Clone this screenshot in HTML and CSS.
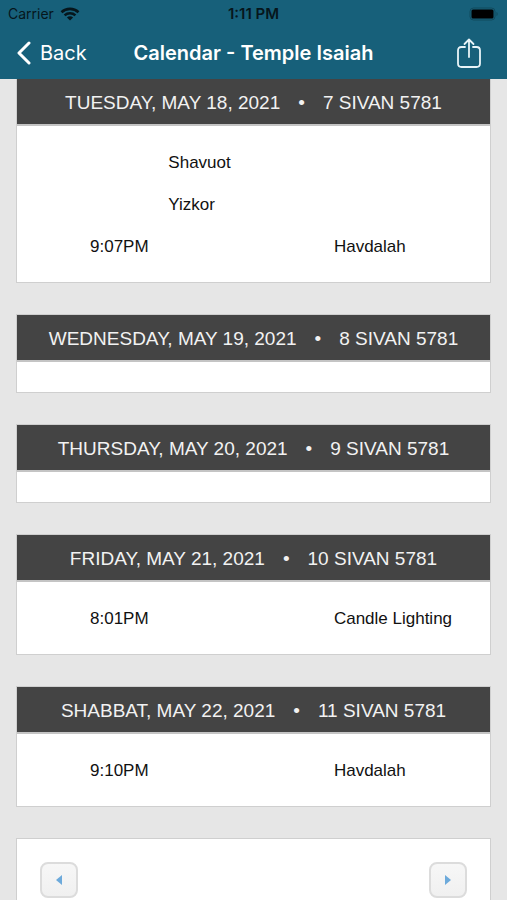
FILE: index.html
```html
<!DOCTYPE html>
<html lang="en">
<head>
  <meta charset="UTF-8" />
  <meta name="viewport" content="width=device-width, initial-scale=1.0" />
  <title>Calendar - Temple Isaiah</title>
  <link rel="stylesheet" href="styles.css">
</head>
<body>
  <header class="top">
    <div class="status-bar">
      <div class="carrier">
        Carrier
        <svg width="20" height="14" viewBox="0 0 20 14" fill="none" stroke="#06161c" stroke-width="2.6">
          <path d="M1.5 5.2C6.2 .8 13.8 .8 18.5 5.2" />
          <path d="M4.6 8.4C7.6 5.6 12.4 5.6 15.4 8.4" />
          <path d="M10 13.5L6.9 10.5C8.7 8.9 11.3 8.9 13.1 10.5Z" fill="#06161c" stroke="none" />
        </svg>
      </div>
      <div class="clock">1:11 PM</div>
      <div class="battery">
        <svg width="30" height="14" viewBox="0 0 30 14">
          <rect x="1" y="1" width="25" height="12" rx="3.5" fill="none" stroke="#114a5d" />
          <rect x="2.500" y="2.500" width="22" height="9" rx="1.5" fill="#000" />
          <path d="M27.5 5v4c1.6-.6 1.6-3.4 0-4z" fill="#114a5d" />
        </svg>
      </div>
    </div>
    <nav class="nav-bar">
      <a class="back" href="#">
        <svg width="14" height="24" viewBox="0 0 14 24" fill="none" stroke="#fff" stroke-width="3" stroke-linecap="round" stroke-linejoin="round">
          <path d="M12 2L2 12L12 22" />
        </svg>
        Back
      </a>
      <h1>Calendar - Temple Isaiah</h1>
      <button type="button" class="share" aria-label="Share">
        <svg width="24" height="30" viewBox="0 0 24 30" fill="none" stroke="#e8f4f8" stroke-width="1.8" stroke-linecap="round" stroke-linejoin="round">
          <path d="M8 9H4.5Q1 9 1 12.5V25.500Q1 29 4.500 29H19.500Q23 29 23 25.500V12.500Q23 9 19.500 9H16" />
          <path d="M12 19V1.500M7.500 6L12 1.500L16.500 6" />
        </svg>
      </button>
    </nav>
  </header>

  <main>
    <section class="day">
      <h2><span>TUESDAY, MAY 18, 2021</span><span>•</span><span>7 SIVAN 5781</span></h2>
      <div class="day-body">
        <table>
          <colgroup><col class="col-time"><col class="col-gap"><col></colgroup>
          <tr><td class="time"></td><td colspan="2">Shavuot</td></tr>
          <tr><td class="time"></td><td colspan="2">Yizkor</td></tr>
          <tr><td class="time">9:07PM</td><td></td><td>Havdalah</td></tr>
        </table>
      </div>
    </section>

    <section class="day">
      <h2><span>WEDNESDAY, MAY 19, 2021</span><span>•</span><span>8 SIVAN 5781</span></h2>
      <div class="day-body"></div>
    </section>

    <section class="day">
      <h2><span>THURSDAY, MAY 20, 2021</span><span>•</span><span>9 SIVAN 5781</span></h2>
      <div class="day-body"></div>
    </section>

    <section class="day">
      <h2><span>FRIDAY, MAY 21, 2021</span><span>•</span><span>10 SIVAN 5781</span></h2>
      <div class="day-body">
        <table>
          <colgroup><col class="col-time"><col class="col-gap"><col></colgroup>
          <tr><td class="time">8:01PM</td><td></td><td>Candle Lighting</td></tr>
        </table>
      </div>
    </section>

    <section class="day">
      <h2><span>SHABBAT, MAY 22, 2021</span><span>•</span><span>11 SIVAN 5781</span></h2>
      <div class="day-body">
        <table>
          <colgroup><col class="col-time"><col class="col-gap"><col></colgroup>
          <tr><td class="time">9:10PM</td><td></td><td>Havdalah</td></tr>
        </table>
      </div>
    </section>

    <section class="day pager">
      <button type="button" aria-label="Previous week">
        <svg width="6" height="10" viewBox="0 0 6 10"><path d="M6 0V10L0 5Z" fill="#6daadb" /></svg>
      </button>
      <button type="button" aria-label="Next week">
        <svg width="6" height="10" viewBox="0 0 6 10"><path d="M0 0V10L6 5Z" fill="#6daadb" /></svg>
      </button>
    </section>
  </main>
</body>
</html>
```
FILE: styles.css
```css
* {
  box-sizing: border-box;
}
body {
  margin: 0;
  background: #e6e6e6;
  color: #111;
  font-family: "Liberation Sans", Arial, sans-serif;
  font-size: 17px;
}
.top {
  position: sticky;
  top: 0;
  background: #17607a;
  font-family: Inter, sans-serif;
}
.status-bar {
  display: grid;
  grid-template-columns: 1fr auto 1fr;
  align-items: center;
  height: 27px;
  padding: 0 8px;
  color: #06161c;
  font-size: 14px;
}
.carrier {
  display: flex;
  align-items: center;
  gap: 6px;
}
.clock {
  font-size: 15px;
  font-weight: 600;
}
.battery {
  display: flex;
  justify-content: flex-end;
}
.nav-bar {
  display: grid;
  grid-template-columns: 1fr auto 1fr;
  align-items: center;
  height: 52px;
  padding: 0 17px;
  color: #fff;
}
.back {
  display: flex;
  align-items: center;
  gap: 9px;
  color: #fff;
  font-size: 20px;
  text-decoration: none;
}
h1 {
  margin: 0;
  font-size: 20px;
  font-weight: 600;
}
.share {
  display: flex;
  justify-self: end;
  margin-right: 9px;
  padding: 0;
  border: none;
  background: none;
  cursor: pointer;
}
/* first card tucks its top border under the bar */
main {
  margin-top: -1px;
  padding: 0 16px;
}
.day {
  margin-bottom: 31px;
  border: 1px solid #cfcfcf;
  background: #fff;
}
h2 {
  display: flex;
  justify-content: center;
  align-items: center;
  gap: 18px;
  height: 47px;
  margin: 0;
  padding-top: 2px;
  border-bottom: 2px solid #c4c4c4;
  background: #444;
  color: #f2f2f2;
  font-size: 19px;
  font-weight: normal;
}
.day-body {
  padding: 15px 0;
}
table {
  width: 100%;
  border-collapse: collapse;
  table-layout: fixed;
}
.col-time {
  width: 32%;
}
.col-gap {
  width: 35%;
}
td {
  height: 42px;
  padding: 2px 0 0;
}
.time {
  padding-left: 73px;
}
.pager {
  display: flex;
  justify-content: space-between;
  padding: 23px;
}
.pager button {
  display: flex;
  justify-content: center;
  align-items: center;
  width: 38px;
  height: 36px;
  border: 2px solid #dcdcdc;
  border-radius: 8px;
  background: linear-gradient(#f7f7f7, #f0f0f0);
  cursor: pointer;
}
```
